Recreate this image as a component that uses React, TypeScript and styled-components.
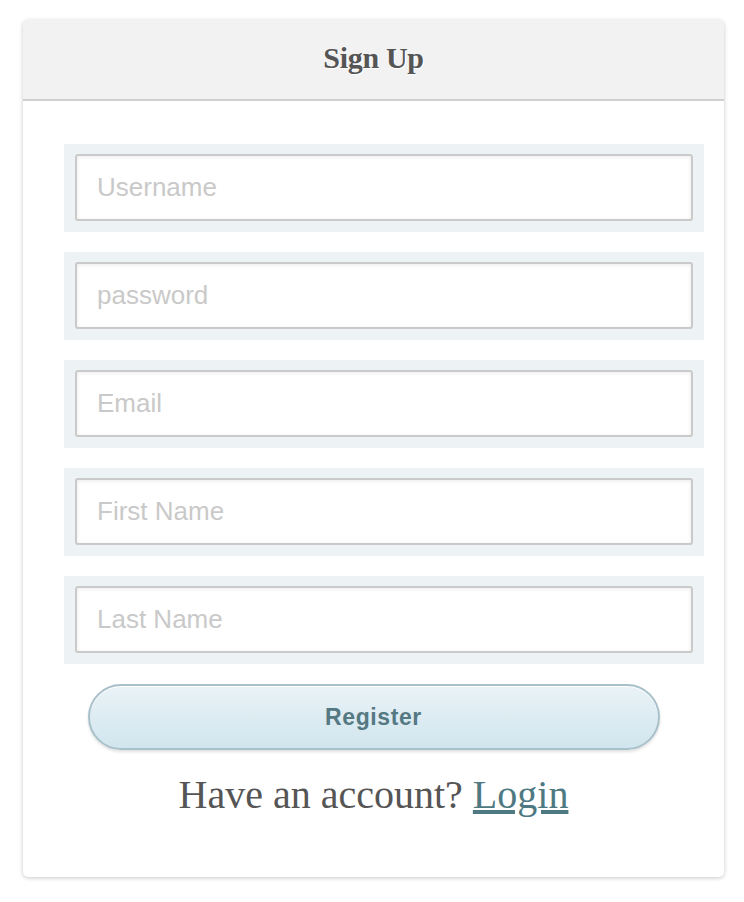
import React from 'react';
import styled, { createGlobalStyle } from 'styled-components';

const GlobalStyle = createGlobalStyle`
  body {
    margin: 0;
    background: #fff;
    font-family: "Liberation Serif", "Times New Roman", serif;
  }
`;

const Page = styled.div`
  padding: 20px 0 24px;
`;

const Card = styled.div`
  width: 701px;
  margin: 0 0 0 23px;
  background: #fff;
  border-radius: 5px;
  box-shadow: 0 1px 4px rgba(0, 0, 0, 0.22);
  overflow: hidden;
`;

const Header = styled.div`
  height: 79px;
  background: #f2f2f2;
  border-bottom: 2px solid #cfcfcf;
  display: flex;
  align-items: center;
  justify-content: center;
`;

const Title = styled.h2`
  margin: 0;
  padding-bottom: 4px;
  font-family: "Liberation Serif", "Times New Roman", serif;
  font-weight: bold;
  font-size: 30px;
  letter-spacing: -0.3px;
  color: #555;
  text-shadow: 1px 1px 0 #fff;
`;

const Form = styled.form`
  padding: 43px 20px 0 41px;
  display: flex;
  flex-direction: column;
  gap: 20px;
`;

const Field = styled.div`
  background: #edf2f5;
  padding: 10px 11px 11px;
`;

const Input = styled.input`
  box-sizing: border-box;
  display: block;
  width: 100%;
  height: 67px;
  border: 2px solid #cacaca;
  border-radius: 3px;
  box-shadow: inset 0 1px 4px rgba(0, 0, 0, 0.08);
  padding: 0 20px;
  font-family: "Liberation Sans", Arial, sans-serif;
  font-size: 26px;
  color: #444;
  background: #fff;
  outline: none;
  &::placeholder {
    color: #c9c9c9;
  }
`;

const Footer = styled.div`
  padding: 20px 0 59px;
  display: flex;
  flex-direction: column;
  align-items: center;
`;

const Button = styled.button`
  box-sizing: border-box;
  width: 572px;
  height: 66px;
  border: 2px solid #a8c0c9;
  border-radius: 33px;
  background: linear-gradient(to bottom, #eaf3f7, #d1e5ee);
  box-shadow: inset 0 1px 0 #fff, 0 2px 3px rgba(0, 0, 0, 0.12);
  font-family: "Liberation Sans", Arial, sans-serif;
  font-weight: bold;
  font-size: 23px;
  letter-spacing: 0.6px;
  color: #557983;
  cursor: pointer;
`;

const Prompt = styled.p`
  margin: 21px 0 0;
  font-family: "Liberation Serif", "Times New Roman", serif;
  font-size: 40px;
  color: #555;
`;

const LoginLink = styled.a`
  color: #4e7982;
  text-decoration: underline;
`;

const fields = ['Username', 'password', 'Email', 'First Name', 'Last Name'];

export default function App() {
  return (
    <Page>
      <GlobalStyle />
      <Card>
        <Header>
          <Title>Sign Up</Title>
        </Header>
        <Form onSubmit={(e) => e.preventDefault()}>
          {fields.map((name) => (
            <Field key={name}>
              <Input
                type={name === 'password' ? 'password' : 'text'}
                placeholder={name}
              />
            </Field>
          ))}
        </Form>
        <Footer>
          <Button type="button">Register</Button>
          <Prompt>
            Have an account? <LoginLink href="#">Login</LoginLink>
          </Prompt>
        </Footer>
      </Card>
    </Page>
  );
}
